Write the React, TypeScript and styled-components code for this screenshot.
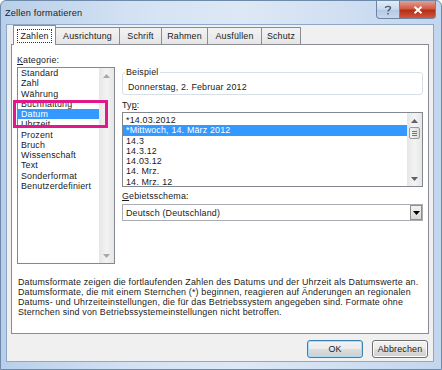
import React from "react";
import styled, { createGlobalStyle, css } from "styled-components";

const Global = createGlobalStyle`
  html, body { margin: 0; padding: 0; background: #fff; }
  body { font-family: "Liberation Sans", Arial, sans-serif; }
  * { box-sizing: border-box; }
`;

const FONT = `"Liberation Sans", Arial, sans-serif`;

const Window = styled.div`
  width: 442px;
  height: 370px;
  display: flex;
  flex-direction: column;
  background: linear-gradient(90deg, #b9cfe9 0%, #d3e2f3 30%, #dde8f5 55%, #c3d6ee 100%);
  border: 1px solid #6e8aab;
  border-radius: 6px 6px 0 0;
  font-family: ${FONT};
  font-size: 8.9px;
  letter-spacing: 0.18px;
  color: #1a1a1a;
  overflow: hidden;
`;

const TitleBar = styled.div`
  height: 23px;
  display: flex;
  align-items: flex-start;
  padding-left: 4px;
  padding-right: 5px;
`;

const Title = styled.div`
  flex: 1;
  font-size: 9.2px;
  line-height: 25px;
  color: #1e1e1e;
`;

const CaptionButton = styled.div<{ $close?: boolean }>`
  height: 18px;
  display: flex;
  align-items: center;
  justify-content: center;
  border: 1px solid #6f84a3;
  border-top: none;
  ${(p) =>
    p.$close
      ? css`
          width: 36px;
          border-radius: 0 0 4px 0;
          border-left: none;
          background: linear-gradient(#e5a093 0%, #cf5c48 45%, #b72d18 55%, #d0593c 100%);
        `
      : css`
          width: 24px;
          border-radius: 0 0 0 4px;
          background: linear-gradient(#e3ecf7 0%, #c8d8ec 50%, #b4c8e2 51%, #c7d8ee 100%);
        `}
`;

const Client = styled.div`
  flex: 1;
  margin: 0 7px 7px 5px;
  background: #f0f0f0;
  border: 1px solid #8ea8c7;
  display: flex;
  flex-direction: column;
`;

const TabRow = styled.div`
  display: flex;
  align-items: flex-end;
  height: 19px;
  padding-left: 6px;
  position: relative;
  z-index: 1;
`;

const Tab = styled.div<{ $active?: boolean; $w: number }>`
  width: ${(p) => p.$w}px;
  display: flex;
  align-items: center;
  justify-content: center;
  border: 1px solid #898c95;
  border-bottom: none;
  margin-right: -1px;
  ${(p) =>
    p.$active
      ? css`
          height: 20px;
          background: #fff;
          margin-bottom: -1px;
          position: relative;
          z-index: 2;
        `
      : css`
          height: 17px;
          background: linear-gradient(#f3f3f3, #e5e5e5);
        `}
`;

const Focus = styled.span`
  outline: 1px dotted #333;
  padding: 0 2px;
  line-height: 12px;
`;

const Panel = styled.div`
  margin: 0 4px;
  height: 290px;
  background: #fff;
  border: 1px solid #898c95;
  position: relative;
  display: grid;
  grid-template-columns: 98px 301px;
  grid-template-rows: 211px auto;
  column-gap: 7px;
  padding: 9px 0 0 5px;
`;

const Col = styled.div<{ $top?: number }>`
  display: flex;
  flex-direction: column;
  padding-top: ${(p) => p.$top ?? 0}px;
`;

const Label = styled.div<{ $mt?: number }>`
  line-height: 12px;
  height: 12px;
  margin-top: ${(p) => p.$mt ?? 0}px;
`;

const U = styled.span`
  text-decoration: underline;
`;

const ListBox = styled.div<{ $h: number; $pt: number }>`
  height: ${(p) => p.$h}px;
  border: 1px solid #828790;
  display: flex;
  background: #fff;
  padding-top: ${(p) => p.$pt}px;
  margin-top: 1px;
`;

const Items = styled.div`
  flex: 1;
  display: flex;
  flex-direction: column;
`;

const Item = styled.div<{ $sel?: boolean }>`
  height: 10.27px;
  line-height: 10.27px;
  padding-left: 3px;
  white-space: nowrap;
  ${(p) =>
    p.$sel &&
    css`
      background: #3399ff;
      color: #fff;
    `}
`;

const ScrollBar = styled.div<{ $mt: number }>`
  width: 15px;
  margin-top: -${(p) => p.$mt}px;
  background: linear-gradient(90deg, #e6e6e6, #f3f3f3 50%, #e6e6e6);
  display: flex;
  flex-direction: column;
  align-items: center;
  justify-content: space-between;
  padding: 6px 0 5px;
`;

const Thumb = styled.div`
  width: 11px;
  height: 12px;
  border: 1px solid #9a9a9a;
  border-radius: 2px;
  background: linear-gradient(90deg, #f4f4f4, #dcdcdc);
  display: flex;
  flex-direction: column;
  align-items: center;
  justify-content: center;
  gap: 1px;
`;

const Grip = styled.div`
  width: 5px;
  height: 1px;
  background: #777;
`;

const ScrollTop = styled.div`
  display: flex;
  flex-direction: column;
  align-items: center;
  gap: 4px;
`;

const Arrow = ({ up, color = "#606060" }: { up?: boolean; color?: string }) => (
  <svg width="7" height="4" viewBox="0 0 7 4">
    <path d={up ? "M0 4 L3.5 0 L7 4 Z" : "M0 0 L3.5 4 L7 0 Z"} fill={color} />
  </svg>
);

const Group = styled.fieldset`
  margin: 0;
  padding: 0 0 0 5px;
  height: 28px;
  border: 1px solid #d5dfe5;
  border-radius: 3px;
  legend {
    padding: 0 1px;
    margin-left: -3px;
    line-height: 10px;
  }
`;

const Sample = styled.div`
  line-height: 12px;
  padding-top: 4px;
`;

const Combo = styled.div`
  height: 17px;
  border: 1px solid #abadb3;
  display: flex;
  align-items: center;
  padding-left: 3px;
  margin-top: 2px;
`;

const ComboText = styled.div`
  flex: 1;
`;

const ComboButton = styled.div`
  width: 12px;
  height: 15px;
  border: 1px solid #8e8f8f;
  background: linear-gradient(#f4f4f4, #d6d6d6);
  display: flex;
  align-items: center;
  justify-content: center;
`;

const Description = styled.div`
  grid-column: 1 / span 2;
  line-height: 10px;
  padding: 12px 0 0 1px;
  white-space: nowrap;
`;

const Highlight = styled.div`
  position: absolute;
  left: 1px;
  top: 55px;
  width: 95px;
  height: 28px;
  border: 3px solid #e0188a;
  pointer-events: none;
`;

const Footer = styled.div`
  flex: 1;
  display: flex;
  justify-content: flex-end;
  align-items: flex-start;
  gap: 9px;
  padding: 6px 5px 0 0;
`;

const Button = styled.div<{ $default?: boolean }>`
  width: 56px;
  height: 18px;
  border: 1px solid ${(p) => (p.$default ? "#3c7fb1" : "#707070")};
  border-radius: 3px;
  background: linear-gradient(#f2f2f2 0%, #ebebeb 50%, #dddddd 51%, #cfcfcf 100%);
  box-shadow: inset 0 0 0 1px ${(p) => (p.$default ? "#a8dbf7" : "#fcfcfc")};
  display: flex;
  align-items: center;
  justify-content: center;
`;

const categories = [
  "Standard", "Zahl", "Währung", "Buchhaltung", "Datum", "Uhrzeit", "Prozent",
  "Bruch", "Wissenschaft", "Text", "Sonderformat", "Benutzerdefiniert",
];

const types = [
  "*14.03.2012", "*Mittwoch, 14. März 2012", "14.3", "14.3.12", "14.03.12",
  "14. Mrz.", "14. Mrz. 12",
];

const tabs: [string, number][] = [
  ["Zahlen", 43], ["Ausrichtung", 65], ["Schrift", 43], ["Rahmen", 47],
  ["Ausfüllen", 55], ["Schutz", 40],
];

export default function App() {
  return (
    <>
      <Global />
      <Window>
        <TitleBar>
          <Title>Zellen formatieren</Title>
          <CaptionButton>
            <svg width="8" height="10" viewBox="0 0 8 10">
              <path d="M1.5 3 C1.5 0.8 6.5 0.8 6.5 3 C6.5 4.6 4 4.6 4 6.5" stroke="#4a5a74" strokeWidth="1.4" fill="none" />
              <rect x="3.3" y="8" width="1.5" height="1.5" fill="#4a5a74" />
            </svg>
          </CaptionButton>
          <CaptionButton $close>
            <svg width="10" height="8" viewBox="0 0 10 8">
              <path d="M1.5 0.8 L8.5 7.2 M8.5 0.8 L1.5 7.2" stroke="#fff" strokeWidth="2" />
            </svg>
          </CaptionButton>
        </TitleBar>
        <Client>
          <TabRow>
            {tabs.map(([t, w], i) => (
              <Tab key={t} $w={w} $active={i === 0}>
                {i === 0 ? <Focus>{t}</Focus> : t}
              </Tab>
            ))}
          </TabRow>
          <Panel>
            <Col>
              <Label><U>K</U>ategorie:</Label>
              <ListBox $h={197} $pt={0}>
                <Items>
                  {categories.map((c) => (
                    <Item key={c} $sel={c === "Datum"}>{c}</Item>
                  ))}
                </Items>
                <ScrollBar $mt={0}>
                  <Arrow up color="#a8a8a8" />
                  <Arrow color="#a8a8a8" />
                </ScrollBar>
              </ListBox>
            </Col>
            <Col $top={13}>
              <Group>
                <legend>Beispiel</legend>
                <Sample>Donnerstag, 2. Februar 2012</Sample>
              </Group>
              <Label $mt={4}>Ty<U>p</U>:</Label>
              <ListBox $h={75} $pt={2}>
                <Items>
                  {types.map((t, i) => (
                    <Item key={t} $sel={i === 1}>{t}</Item>
                  ))}
                </Items>
                <ScrollBar $mt={2}>
                  <ScrollTop>
                    <Arrow up />
                    <Thumb><Grip /><Grip /><Grip /></Thumb>
                  </ScrollTop>
                  <Arrow />
                </ScrollBar>
              </ListBox>
              <Label $mt={3}><U>G</U>ebietsschema:</Label>
              <Combo>
                <ComboText>Deutsch (Deutschland)</ComboText>
                <ComboButton><Arrow color="#000" /></ComboButton>
              </Combo>
            </Col>
            <Description>
              Datumsformate zeigen die fortlaufenden Zahlen des Datums und der Uhrzeit als Datumswerte an.
              <br />
              Datumsformate, die mit einem Sternchen (*) beginnen, reagieren auf Änderungen an regionalen
              <br />
              Datums- und Uhrzeiteinstellungen, die für das Betriebssystem angegeben sind. Formate ohne
              <br />
              Sternchen sind von Betriebssystemeinstellungen nicht betroffen.
            </Description>
            <Highlight />
          </Panel>
          <Footer>
            <Button $default>OK</Button>
            <Button>Abbrechen</Button>
          </Footer>
        </Client>
      </Window>
    </>
  );
}
